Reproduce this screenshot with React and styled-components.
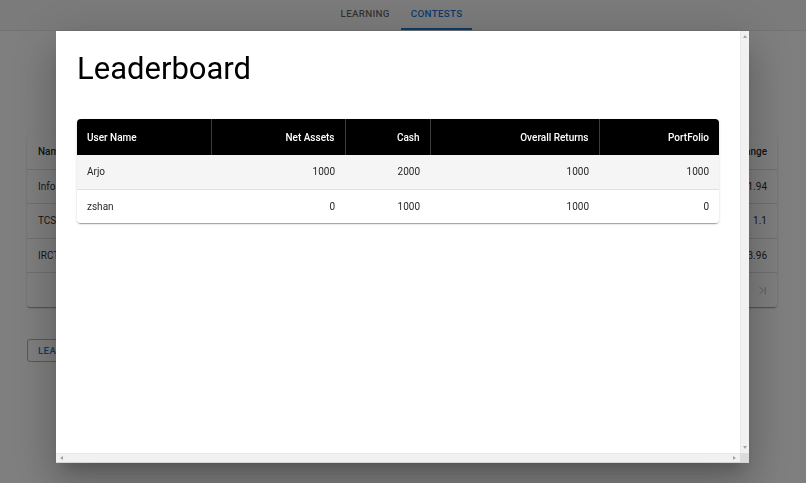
import React from 'react'
import styled, { createGlobalStyle } from 'styled-components'
import { ChevronLast } from 'lucide-react'

const GlobalStyle = createGlobalStyle`
    html, body {
        margin: 0;
        padding: 0;
        background: #fff;
        font-family: Roboto, "Liberation Sans", Arial, sans-serif;
    }
    * { box-sizing: border-box; }
`

const stocks = [
    { name: 'Infosys', change: '1.94' },
    { name: 'TCS', change: '1.1' },
    { name: 'IRCTC', change: '3.96' },
]

const leaders = [
    { user: 'Arjo', netAssets: 1000, cash: 2000, returns: 1000, portfolio: 1000 },
    { user: 'zshan', netAssets: 0, cash: 1000, returns: 1000, portfolio: 0 },
]

const columns = [
    { key: 'user', label: 'User Name', width: 134, align: 'left' },
    { key: 'netAssets', label: 'Net Assets', width: 134, align: 'right' },
    { key: 'cash', label: 'Cash', width: 85, align: 'right' },
    { key: 'returns', label: 'Overall Returns', width: 169, align: 'right' },
    { key: 'portfolio', label: 'PortFolio', width: 120, align: 'right' },
]

function App() {
    return (
        <>
            <GlobalStyle />
            <Page>
                <AppBar>
                    <Tab>Learning</Tab>
                    <Tab $active>Contests</Tab>
                </AppBar>
                <Main>
                    <StockCard>
                        <StockRow $head>
                            <span>Name</span>
                            <span>Change</span>
                        </StockRow>
                        {stocks.map(s => (
                            <StockRow key={s.name}>
                                <span>{s.name}</span>
                                <span>{s.change}</span>
                            </StockRow>
                        ))}
                        <Pager>
                            <ChevronLast size={13} strokeWidth={1.8} />
                        </Pager>
                    </StockCard>
                    <OutlineButton>Leaderboard</OutlineButton>
                </Main>
            </Page>

            <Backdrop>
                <Dialog>
                    <DialogBody>
                        <Title>Leaderboard</Title>
                        <TablePaper>
                            <Table>
                                <thead>
                                    <tr>
                                        {columns.map(c => (
                                            <Th key={c.key} $w={c.width} $align={c.align}>{c.label}</Th>
                                        ))}
                                    </tr>
                                </thead>
                                <tbody>
                                    {leaders.map((row, i) => (
                                        <Tr key={row.user} $striped={i % 2 === 0}>
                                            {columns.map(c => (
                                                <Td key={c.key} $align={c.align}>{row[c.key]}</Td>
                                            ))}
                                        </Tr>
                                    ))}
                                </tbody>
                            </Table>
                        </TablePaper>
                    </DialogBody>
                    <ScrollBar $vertical>
                        <Arrow $dir="up" />
                        <Arrow $dir="down" />
                    </ScrollBar>
                    <ScrollBar>
                        <Arrow $dir="left" />
                        <Arrow $dir="right" />
                    </ScrollBar>
                    <ScrollCorner />
                </Dialog>
            </Backdrop>
        </>
    )
}

const Page = styled.div`
    min-height: 100vh;
    background: #fff;
`

const AppBar = styled.nav`
    height: 31px;
    display: flex;
    justify-content: center;
    align-items: stretch;
    border-bottom: 1px solid #e6e6e6;
    background: #f7f7f7;
    padding-right: 4px;
`

const Tab = styled.div`
    display: flex;
    align-items: center;
    padding: 0 10px 1px;
    margin-left: 1px;
    font-size: 9.8px;
    font-weight: 500;
    letter-spacing: 0.3px;
    text-transform: uppercase;
    color: ${p => p.$active ? '#1976d2' : 'rgba(0,0,0,0.6)'};
    border-bottom: 2px solid ${p => p.$active ? '#1976d2' : 'transparent'};
`

const Main = styled.main`
    padding: 104px 29px 0 27px;
`

const StockCard = styled.div`
    background: #fff;
    border-radius: 3px;
    box-shadow: 0 2px 1px -1px rgba(0,0,0,.2), 0 1px 1px 0 rgba(0,0,0,.14), 0 1px 3px 0 rgba(0,0,0,.12);
`

const StockRow = styled.div`
    height: 34.5px;
    display: flex;
    justify-content: space-between;
    align-items: center;
    padding: 0 10px 0 11px;
    font-size: 10px;
    font-weight: ${p => p.$head ? 500 : 400};
    color: rgba(0,0,0,0.87);
    border-bottom: 1px solid #e0e0e0;
`

const Pager = styled.div`
    height: 34px;
    display: flex;
    justify-content: flex-end;
    align-items: center;
    padding-right: 8px;
    color: rgba(0,0,0,0.3);
`

const OutlineButton = styled.button`
    margin-top: 32px;
    height: 23px;
    padding: 0 10px;
    font-family: inherit;
    font-size: 9.6px;
    font-weight: 500;
    letter-spacing: 0.4px;
    text-transform: uppercase;
    color: #1976d2;
    background: transparent;
    border: 1px solid rgba(25,118,210,0.5);
    border-radius: 3px;
`

const Backdrop = styled.div`
    position: fixed;
    inset: 0;
    background: rgba(0,0,0,0.5);
    display: flex;
    justify-content: center;
    align-items: flex-start;
    padding-top: 31px;
    padding-right: 1px;
`

const Dialog = styled.div`
    width: 693px;
    height: 432px;
    background: #fff;
    display: grid;
    grid-template-columns: 1fr 9px;
    grid-template-rows: 1fr 9px;
    overflow: hidden;
    border-bottom: 1px solid #d6d6d6;
    box-shadow: 0 11px 15px -7px rgba(0,0,0,.2), 0 24px 38px 3px rgba(0,0,0,.14), 0 9px 46px 8px rgba(0,0,0,.12);
`

const DialogBody = styled.div`
    overflow: hidden;
    padding: 20px 21px;
`

const ScrollBar = styled.div`
    background: #f1f1f1;
    display: flex;
    flex-direction: ${p => p.$vertical ? 'column' : 'row'};
    justify-content: space-between;
    align-items: center;
    padding: ${p => p.$vertical ? '4px 0' : '0 4px'};
    border-${p => p.$vertical ? 'left' : 'top'}: 1px solid #e8e8e8;
`

const arrowBorders = {
    up: 'border-left: 2.5px solid transparent; border-right: 2.5px solid transparent; border-bottom: 3px solid #a3a3a3;',
    down: 'border-left: 2.5px solid transparent; border-right: 2.5px solid transparent; border-top: 3px solid #a3a3a3;',
    left: 'border-top: 2.5px solid transparent; border-bottom: 2.5px solid transparent; border-right: 3px solid #a3a3a3;',
    right: 'border-top: 2.5px solid transparent; border-bottom: 2.5px solid transparent; border-left: 3px solid #a3a3a3;',
}

const Arrow = styled.span`
    width: 0;
    height: 0;
    ${p => arrowBorders[p.$dir]}
`

const ScrollCorner = styled.div`
    background: #dcdcdc;
`

const Title = styled.h3`
    margin: 0 0 33px;
    font-size: 31px;
    font-weight: 400;
    line-height: 35px;
    color: #000;
`

const TablePaper = styled.div`
    border-radius: 4px;
    overflow: hidden;
    background: #fff;
    box-shadow: 0 2px 1px -1px rgba(0,0,0,.2), 0 1px 1px 0 rgba(0,0,0,.14), 0 1px 3px 0 rgba(0,0,0,.12);
`

const Table = styled.table`
    width: 100%;
    border-collapse: collapse;
    table-layout: fixed;
`

const Th = styled.th`
    width: ${p => p.$w}px;
    height: 36px;
    padding: 0 10px;
    background: #000;
    color: #fff;
    font-size: 10px;
    font-weight: 500;
    text-align: ${p => p.$align};
    border-right: 1px solid #3c3c3c;
    &:last-child { border-right: none; }
`

const Tr = styled.tr`
    background: ${p => p.$striped ? '#f5f5f5' : '#fff'};
    border-bottom: 1px solid #e0e0e0;
    &:last-child { border-bottom: none; }
`

const Td = styled.td`
    height: 34px;
    padding: 0 10px;
    font-size: 10px;
    color: rgba(0,0,0,0.87);
    text-align: ${p => p.$align};
`

export default App
